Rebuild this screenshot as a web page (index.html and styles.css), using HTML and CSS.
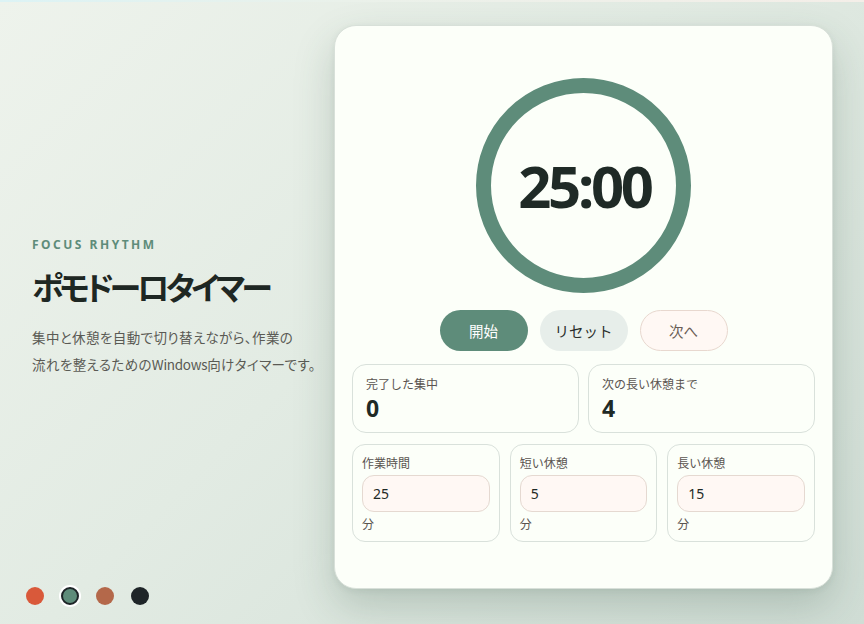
FILE: index.html
```html
<!DOCTYPE html>
<html lang="ja">
<head>
<meta charset="utf-8">
<title>ポモドーロタイマー</title>
<link rel="stylesheet" href="styles.css">
</head>
<body>
<div class="topbar"></div>
<div class="page">
  <section class="side">
    <div class="intro">
      <div class="eyebrow">FOCUS RHYTHM</div>
      <h1 class="title">ポモドーロタイマー</h1>
      <p class="desc">集中と休憩を自動で切り替えながら、作業の<br>流れを整えるための<span class="latin">Windows</span>向けタイマーです。</p>
    </div>
    <div class="swatches">
      <span class="dot dot-red"></span>
      <span class="dot dot-green is-active"></span>
      <span class="dot dot-brown"></span>
      <span class="dot dot-black"></span>
    </div>
  </section>
  <main class="card">
    <div class="ring-wrap">
      <svg class="ring" width="215" height="215" viewBox="0 0 215 215">
        <circle cx="107.5" cy="107.5" r="100" fill="none" stroke="#5e8c7a" stroke-width="15"/>
      </svg>
      <div class="time">25:00</div>
    </div>
    <div class="controls">
      <button class="btn btn-primary">開始</button>
      <button class="btn btn-secondary">リセット</button>
      <button class="btn btn-ghost">次へ</button>
    </div>
    <div class="stats">
      <div class="stat">
        <div class="stat-label">完了した集中</div>
        <div class="stat-value">0</div>
      </div>
      <div class="stat">
        <div class="stat-label">次の長い休憩まで</div>
        <div class="stat-value">4</div>
      </div>
    </div>
    <div class="settings">
      <div class="setting">
        <div class="setting-label">作業時間</div>
        <div class="input">25</div>
        <div class="unit">分</div>
      </div>
      <div class="setting">
        <div class="setting-label">短い休憩</div>
        <div class="input">5</div>
        <div class="unit">分</div>
      </div>
      <div class="setting">
        <div class="setting-label">長い休憩</div>
        <div class="input">15</div>
        <div class="unit">分</div>
      </div>
    </div>
  </main>
</div>
</body>
</html>
```
FILE: styles.css
```css
* { box-sizing: border-box; }
html, body {
  margin: 0;
  padding: 0;
  width: 864px;
  height: 624px;
  overflow: hidden;
}
body {
  font-family: "Noto Sans", "Noto Sans CJK JP", sans-serif;
  background: linear-gradient(135deg, #eef3ec 0%, #e2ebe3 45%, #d0ddd5 100%);
  color: #1f2a26;
}
.topbar {
  height: 2px;
  background: linear-gradient(90deg, #dcf3f5 0%, #eaf1ea 40%, #f4eee8 100%);
}
.page {
  display: flex;
  height: 622px;
  padding: 0 31px 0 0;
}
.side {
  flex: 1;
  display: flex;
  flex-direction: column;
  padding: 0 0 17px 26px;
}
.intro {
  flex: 1;
  display: flex;
  flex-direction: column;
  justify-content: center;
  padding: 28px 0 0 6px;
}
.eyebrow {
  font-size: 12px;
  font-weight: 700;
  letter-spacing: 2.5px;
  color: #5e8c7a;
  line-height: 14px;
}
.title {
  margin: 12px 0 0;
  font-family: "Noto Sans CJK JP", sans-serif;
  font-size: 32px;
  font-weight: 700;
  line-height: 44px;
  letter-spacing: -3.9px;
  font-feature-settings: "palt";
  color: #1e2723;
}
.desc {
  margin: 16px 0 0;
  font-family: "Noto Sans CJK JP", sans-serif;
  font-size: 13.5px;
  line-height: 27px;
  color: #5a5a54;
  font-feature-settings: "palt";
  letter-spacing: 0.4px;
  white-space: nowrap;
}
.latin {
  letter-spacing: -0.3px;
}
.swatches {
  display: flex;
  align-items: center;
  gap: 17px;
  height: 22px;
}
.dot {
  width: 18px;
  height: 18px;
  border-radius: 50%;
  display: block;
}
.dot-red { background: #d9593a; }
.dot-green { background: #5e8c7a; border: 2px solid #1e2528; box-shadow: 0 0 0 2px #ffffff; }
.dot-brown { background: #b4684a; }
.dot-black { background: #1e2528; }

.card {
  width: 499px;
  height: 564px;
  margin-top: 23px;
  background: #fcfff9;
  border: 1px solid #d8e0d9;
  border-radius: 22px;
  box-shadow: 0 18px 40px rgba(50, 80, 65, 0.22), 0 2px 6px rgba(50, 80, 65, 0.08);
  padding: 52px 17px 17px;
  display: flex;
  flex-direction: column;
  align-items: stretch;
}
.ring-wrap {
  position: relative;
  width: 215px;
  height: 215px;
  align-self: center;
}
.ring { display: block; }
.time {
  position: absolute;
  inset: 0;
  display: flex;
  align-items: center;
  justify-content: center;
  font-family: "Noto Sans", sans-serif;
  font-size: 58px;
  font-weight: 700;
  letter-spacing: -3.3px;
  color: #1f2a26;
  padding-left: 2px;
}
.controls {
  display: flex;
  justify-content: center;
  gap: 12px;
  margin-top: 17px;
}
.btn {
  width: 88px;
  height: 41px;
  border-radius: 21px;
  border: 1px solid transparent;
  font-family: "Noto Sans CJK JP", sans-serif;
  font-size: 14.5px;
  padding: 0;
}
.btn-primary { background: #5e8c7a; color: #ffffff; }
.btn-secondary { background: #e7eeea; color: #2a2f2c; }
.btn-ghost { background: #fff8f4; border-color: #e8d8cf; color: #6a5d56; }

.stats {
  display: grid;
  grid-template-columns: 1fr 1fr;
  gap: 9px;
  margin-top: 13px;
}
.stat {
  height: 69px;
  border: 1px solid #d9e1db;
  border-radius: 14px;
  padding: 10px 13px;
}
.stat-label {
  font-family: "Noto Sans CJK JP", sans-serif;
  font-size: 12px;
  line-height: 18px;
  color: #5a5450;
}
.stat-value {
  margin-top: 1px;
  font-size: 23px;
  font-weight: 700;
  line-height: 28px;
  color: #1f2a26;
}
.settings {
  display: grid;
  grid-template-columns: 1fr 1fr 1fr;
  gap: 10px;
  margin-top: 11px;
}
.setting {
  height: 98px;
  border: 1px solid #d9e1db;
  border-radius: 13px;
  padding: 9px 9px;
}
.setting-label, .unit {
  font-family: "Noto Sans CJK JP", sans-serif;
  font-size: 12px;
  line-height: 18px;
  color: #5a5450;
}
.input {
  margin-top: 3px;
  height: 37px;
  border: 1px solid #e5d9d1;
  border-radius: 12px;
  background: #fff8f4;
  padding: 0 10px;
  display: flex;
  align-items: center;
  font-size: 14px;
  color: #1f2a26;
}
.unit { margin-top: 3px; }
```
